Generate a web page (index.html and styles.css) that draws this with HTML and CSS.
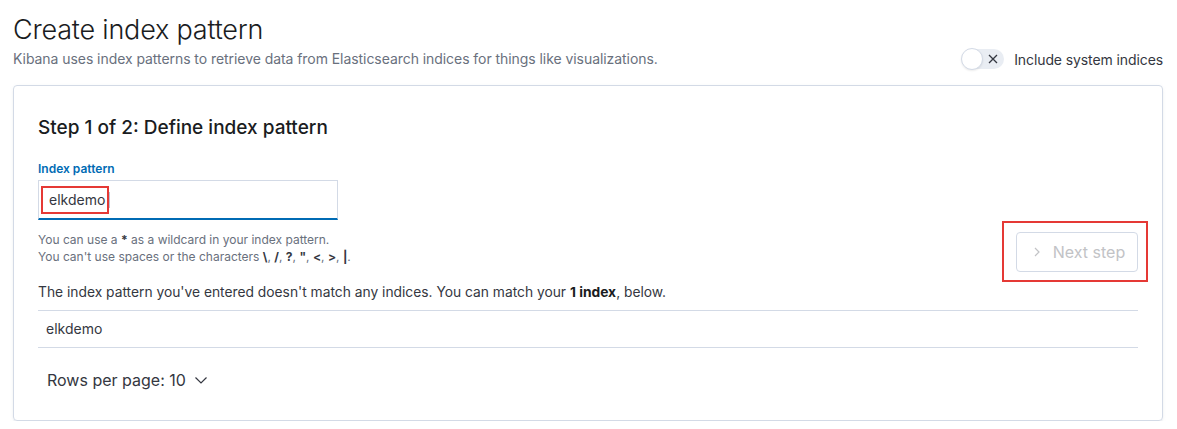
FILE: index.html
```html
<!DOCTYPE html>
<html>
<head>
<meta charset="utf-8">
<link rel="stylesheet" href="styles.css">
</head>
<body>
<div class="page">
  <header class="head">
    <h1 class="title">Create index pattern</h1>
    <div class="head-row">
      <p class="subtitle">Kibana uses index patterns to retrieve data from Elasticsearch indices for things like visualizations.</p>
      <div class="switch">
        <span class="switch-track">
          <span class="switch-knob"></span>
          <svg class="switch-x" width="12" height="12" viewBox="0 0 12 12"><path d="M2 2 L10 10 M10 2 L2 10" stroke="#343741" stroke-width="1.3" fill="none"/></svg>
        </span>
        <span class="switch-label">Include system indices</span>
      </div>
    </div>
  </header>

  <section class="card">
    <h2 class="step">Step 1 of 2: Define index pattern</h2>
    <div class="form-row">
      <div class="form">
        <label class="label">Index pattern</label>
        <div class="input">
          <span class="hl">elkdemo</span><span class="caret"></span>
        </div>
        <div class="help">
          <div>You can use a <b>*</b> as a wildcard in your index pattern.</div>
          <div>You can't use spaces or the characters <b>\</b>, <b>/</b>, <b>?</b>, <b>"</b>, <b>&lt;</b>, <b>&gt;</b>, <b>|</b>.</div>
        </div>
      </div>
      <div class="btn-wrap">
        <button class="btn" disabled>
          <svg width="12" height="12" viewBox="0 0 12 12"><path d="M4 2 L8 6 L4 10" stroke="#c2c3c6" stroke-width="1.2" fill="none"/></svg>
          <span>Next step</span>
        </button>
      </div>
    </div>
    <p class="msg">The index pattern you've entered doesn't match any indices. You can match your <b>1 index</b>, below.</p>
    <div class="table">
      <div class="row">elkdemo</div>
    </div>
    <div class="pager">
      <span>Rows per page: 10</span>
      <svg width="14" height="14" viewBox="0 0 14 14"><path d="M1.5 4.5 L7 10 L12.5 4.5" stroke="#343741" stroke-width="1.2" fill="none"/></svg>
    </div>
  </section>
</div>
</body>
</html>
```

FILE: styles.css
```css
* { box-sizing: border-box; }
html, body { margin: 0; padding: 0; background: #fff; }
body { font-family: Inter, "Noto Sans", sans-serif; color: #343741; }
.page { padding: 12px 14px 0 13px; }
.title { margin: 0; font-size: 27px; font-weight: 300; color: #1a1c21; line-height: 36px; letter-spacing: -0.2px; }
.head-row { display: flex; justify-content: space-between; align-items: center; margin-top: 0; height: 22px; }
.subtitle { margin: 0; font-size: 14px; color: #69707d; line-height: 20px; letter-spacing: -0.06px; }
.switch { display: flex; align-items: center; gap: 10px; }
.switch-track { position: relative; width: 42px; height: 20px; border-radius: 10px; background: #e9edf3; display: inline-block; }
.switch-knob { position: absolute; left: -1px; top: -1px; width: 22px; height: 22px; border-radius: 50%; background: #fff; border: 1px solid #d3dae6; box-shadow: 0 1px 2px rgba(0,0,0,0.08); }
.switch-x { position: absolute; left: 25px; top: 4px; }
.switch-label { font-size: 14px; color: #343741; letter-spacing: -0.1px; }
.card { margin-top: 15px; border: 1px solid #d3dae6; border-radius: 4px; padding: 24px 24px 24px 24px; box-shadow: 0 2px 2px -1px rgba(152,162,179,0.3), 0 1px 5px -2px rgba(152,162,179,0.3); height: 336px; }
.step { margin: 4px 0 0; font-size: 19px; font-weight: 500; color: #1a1c21; line-height: 28px; }
.form-row { display: flex; justify-content: space-between; align-items: flex-end; margin-top: 20px; }
.label { display: block; font-size: 12px; font-weight: 600; color: #006bb4; line-height: 14px; }
.input { margin-top: 4px; width: 300px; height: 40px; border: 1px solid #d3dae6; border-bottom: 2px solid #006bb4; background: #fff; display: flex; align-items: center; padding-left: 2px; }
.hl { border: 2px solid #e53935; font-size: 14px; color: #343741; padding: 3px 2px 3px 6px; line-height: 18px; }
.caret { width: 1px; height: 16px; background: #b8c4d6; }
.help { margin-top: 11px; font-size: 12px; color: #69707d; line-height: 17px; }
.help b { color: #343741; }
.btn-wrap { border: 2px solid #e53935; padding: 9px 8px 8px 12px; margin-right: -10px; margin-bottom: -17px; }
.btn { width: 122px; height: 40px; border: 1px solid #d3dae6; border-radius: 4px; background: #fff; display: flex; align-items: center; justify-content: center; gap: 10px; font-family: inherit; font-size: 16px; color: #c2c3c6; padding: 0 0 0 2px; }
.msg { margin: 17px 0 0; font-size: 13.8px; line-height: 20px; color: #343741; }
.msg b { font-weight: 700; color: #1a1c21; }
.table { margin-top: 8px; border-top: 1px solid #d3dae6; border-bottom: 1px solid #d3dae6; }
.row { padding: 8px 8px; font-size: 14px; line-height: 20px; color: #343741; }
.pager { margin-top: 22px; padding-left: 9px; display: flex; align-items: center; gap: 8px; font-size: 16px; color: #343741; }
```
